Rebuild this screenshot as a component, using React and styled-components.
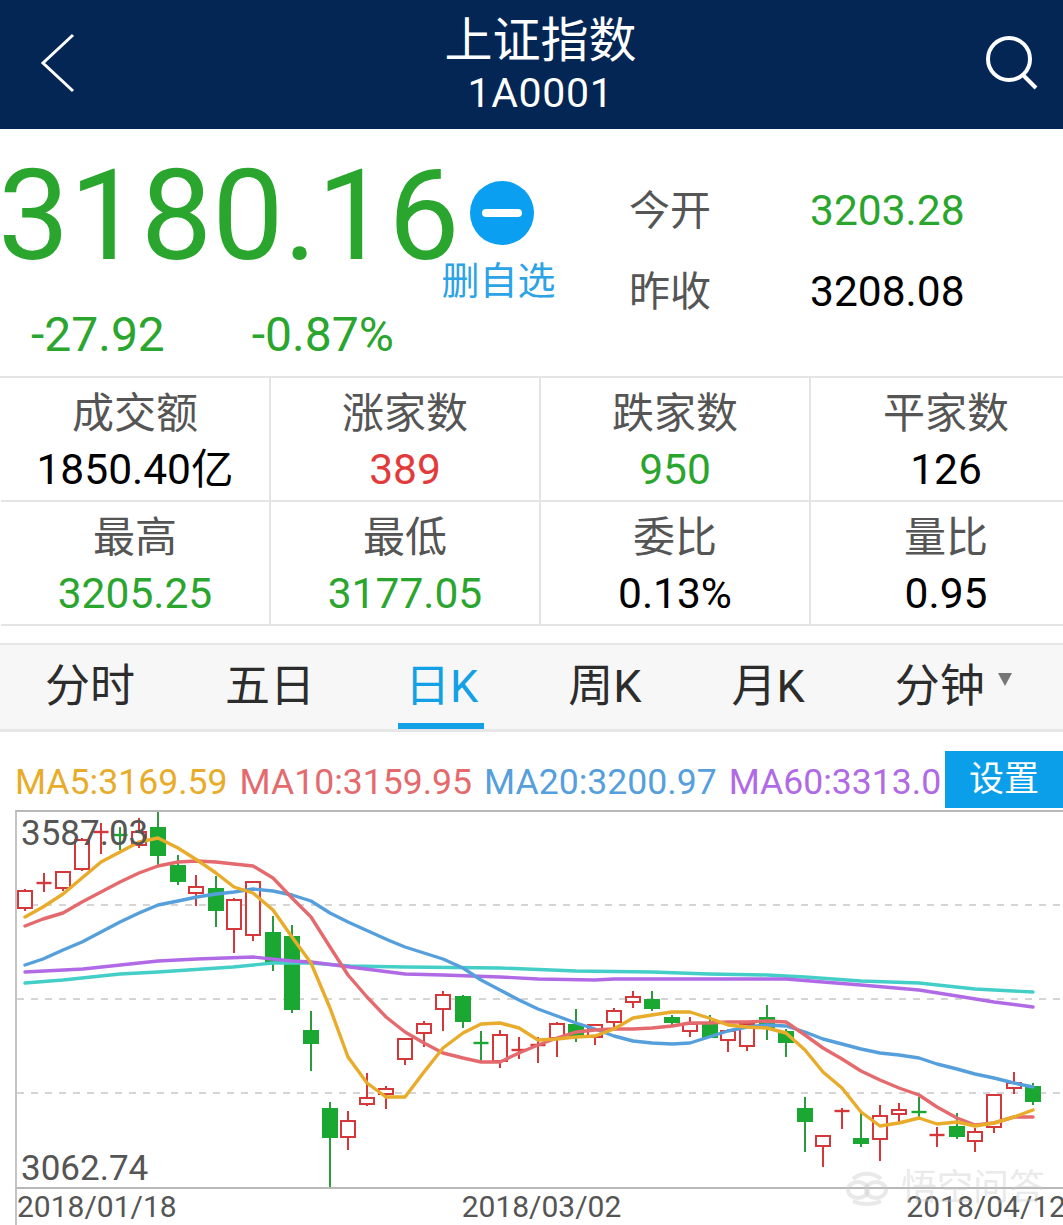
import React from 'react';
import styled, { createGlobalStyle } from 'styled-components';

const GREEN = '#2aa52e';
const CANDLE_RED = '#d5383a';
const CANDLE_GREEN = '#1aa833';

const GlobalStyle = createGlobalStyle`
	html, body {
		margin: 0;
		padding: 0;
		background: #fff;
		overflow: hidden;
	}
	body {
		font-family: Roboto, "Noto Sans CJK SC", sans-serif;
	}
`;

const Page = styled.div`
	position: relative;
	width: 1063px;
	height: 1225px;
	overflow: hidden;
	background: #fff;
`;

const Header = styled.header`
	display: flex;
	align-items: center;
	justify-content: space-between;
	height: 129px;
	padding: 0 25px 3px 40px;
	box-sizing: border-box;
	background: #032654;
	color: #fff;
`;

const TitleBlock = styled.div`
	display: flex;
	flex-direction: column;
	align-items: center;
	margin: 3px 0 0 21px;
`;

const Title = styled.div`
	font-size: 48px;
	line-height: 56px;
`;

const Code = styled.div`
	font-size: 41px;
	line-height: 48px;
	letter-spacing: 0.7px;
`;

const Summary = styled.section`
	display: flex;
	height: 247px;
`;

const PriceColumn = styled.div`
	width: 441px;
	white-space: nowrap;
`;

const Price = styled.div`
	height: 152px;
	margin: 24px 0 0 -2px;
	font-size: 127px;
	line-height: 125px;
	color: ${GREEN};
`;

const ChangeRow = styled.div`
	display: flex;
	gap: 87px;
	padding-left: 31px;
	font-size: 48px;
	line-height: 60px;
	color: ${GREEN};
`;

const FavColumn = styled.div`
	display: flex;
	flex-direction: column;
	align-items: center;
	width: 115px;
	padding-top: 52px;
`;

const FavIcon = styled.div`
	display: flex;
	align-items: center;
	justify-content: center;
	width: 64px;
	height: 64px;
	margin-left: 6px;
	border-radius: 50%;
	background: #0a9ff0;

	&::after {
		content: '';
		width: 40px;
		height: 8px;
		border-radius: 4px;
		background: #fff;
	}
`;

const FavLabel = styled.div`
	margin-top: 13px;
	font-size: 38px;
	line-height: 46px;
	white-space: nowrap;
	color: #2ba3e6;
`;

const QuoteGrid = styled.div`
	display: grid;
	grid-template-columns: 181px auto;
	grid-auto-rows: 81px;
	align-items: center;
	margin: 41px 0 0 73px;
`;

const QuoteLabel = styled.div`
	margin-bottom: 8px;
	font-size: 41px;
	color: #555;
`;

const QuoteValue = styled.div`
	font-size: 42.5px;
	color: ${props => props.$color || '#000'};
`;

const StatsGrid = styled.section`
	display: grid;
	grid-template-columns: repeat(4, 270px);
	padding-left: 1px;
	border-top: 2px solid #e4e4e4;
`;

const StatCell = styled.div`
	display: flex;
	flex-direction: column;
	align-items: center;
	box-sizing: border-box;
	height: 124px;
	padding-top: 9px;
	border-bottom: 2px solid #e4e4e4;
	border-right: ${props => (props.$last ? 'none' : '2px solid #e4e4e4')};
`;

const StatLabel = styled.div`
	font-size: 42px;
	line-height: 54px;
	color: #555;
`;

const StatValue = styled.div`
	margin-top: 2px;
	font-size: 42.5px;
	line-height: 54px;
	color: ${props => props.$color || '#000'};
`;

const TabBar = styled.nav`
	display: flex;
	gap: 90px;
	box-sizing: border-box;
	height: 89px;
	margin-top: 17px;
	padding-left: 45px;
	background: #f7f7f7;
	border-top: 2px solid #e6e6e6;
	border-bottom: 3px solid #e6e6e6;
`;

const Tab = styled.div`
	display: flex;
	align-items: center;
	gap: 13px;
	margin: ${props => (props.$active ? '0 -6px 0 -7px' : '0')};
	padding: ${props => (props.$active ? '0 6px 4px 7px' : '0 0 4px')};
	font-size: 45px;
	color: ${props => (props.$active ? '#12a0e6' : '#2c2c2c')};
	border-bottom: 6px solid ${props => (props.$active ? '#12a0e6' : 'transparent')};
`;

const Caret = styled.span`
	width: 0;
	height: 0;
	margin-bottom: 6px;
	border-left: 7px solid transparent;
	border-right: 7px solid transparent;
	border-top: 13px solid #777;
`;

const LegendRow = styled.div`
	display: flex;
	align-items: flex-end;
	height: 57px;
	margin-top: 19px;
	padding-left: 15px;
`;

const LegendItems = styled.div`
	display: flex;
	flex: 1;
	gap: 12px;
	padding-bottom: 2px;
	overflow: hidden;
	white-space: nowrap;
	font-size: 35.6px;
	line-height: 47px;
`;

const LegendItem = styled.span`
	color: ${props => props.$color};
`;

const SettingsButton = styled.div`
	display: flex;
	align-items: center;
	justify-content: center;
	flex: none;
	box-sizing: border-box;
	width: 118px;
	height: 57px;
	padding-bottom: 8px;
	background: #0a9fe8;
	color: #fff;
	font-size: 35px;
`;

const ChartFrame = styled.div`
	position: relative;
	box-sizing: border-box;
	height: 379px;
	margin: 2px 0 0 15px;
	border-top: 2px solid #b8b8b8;
	border-bottom: 2px solid #b8b8b8;
	border-left: 2px solid #c4c4c4;
`;

const ChartSvg = styled.svg`
	display: block;
`;

const PriceMark = styled.div`
	position: absolute;
	left: 4px;
	${props => (props.$top ? 'top: 1px;' : 'bottom: -3px;')}
	font-size: 35px;
	line-height: 42px;
	color: #555;
`;

const DateRow = styled.div`
	display: flex;
	justify-content: space-between;
	box-sizing: border-box;
	width: 1051px;
	height: 36px;
	margin-left: 15px;
	border-left: 2px solid #c4c4c4;
	font-size: 30px;
	line-height: 36px;
	color: #555;
	white-space: nowrap;
`;

const Watermark = styled.div`
	position: absolute;
	right: 18px;
	bottom: 17px;
	display: flex;
	align-items: center;
	gap: 12px;
	font-size: 36px;
	line-height: 40px;
	color: rgba(200, 200, 200, 0.4);
`;

const ChevronIcon = () => (
	<svg width="36" height="60" viewBox="40 33 36 60" fill="none" stroke="#fff" strokeWidth="3">
		<path d="M73 35 43 63 73 91" />
	</svg>
);

const SearchIcon = () => (
	<svg width="54" height="54" viewBox="985 37 54 54" fill="none" stroke="#fff" strokeWidth="4">
		<circle cx="1010" cy="60" r="21" />
		<path d="M1024 76 1037 89" />
	</svg>
);

const CloudIcon = () => (
	<svg width="44" height="36" viewBox="0 0 44 36" fill="none" stroke="rgba(200,200,200,0.4)" strokeWidth="4">
		<ellipse cx="13" cy="20" rx="10" ry="8" />
		<ellipse cx="31" cy="20" rx="10" ry="8" />
		<path d="M8 9C16 2 28 2 36 9M8 31C16 35 28 35 36 31" />
	</svg>
);

// [x, wickTop, wickBottom, bodyTop, bodyBottom, isUp] in page coordinates
const CANDLES = [
	[25, 889, 911, 891, 908, 1], [44, 873, 892, 883, 883, 1], [63, 871, 891, 872, 888, 1],
	[82, 838, 871, 840, 869, 1], [101, 823, 854, 832, 832, 1], [120, 827, 850, 835, 835, 0],
	[139, 818, 848, 832, 845, 1], [158, 810, 865, 828, 855, 0], [178, 855, 885, 866, 881, 0],
	[196, 875, 906, 887, 893, 1], [216, 876, 927, 889, 910, 0], [234, 898, 953, 900, 929, 1],
	[253, 881, 941, 882, 935, 1], [273, 916, 971, 933, 962, 0], [292, 925, 1013, 937, 1009, 0],
	[311, 1011, 1071, 1031, 1043, 0], [330, 1102, 1187, 1109, 1137, 0], [348, 1111, 1150, 1121, 1137, 1],
	[367, 1073, 1106, 1098, 1104, 1], [386, 1086, 1109, 1089, 1094, 1], [405, 1039, 1065, 1039, 1059, 1],
	[424, 1021, 1047, 1024, 1033, 1], [443, 991, 1031, 995, 1009, 1], [463, 995, 1028, 997, 1021, 0],
	[481, 1031, 1061, 1043, 1043, 0], [500, 1030, 1068, 1035, 1061, 1], [519, 1037, 1059, 1050, 1050, 1],
	[538, 1037, 1063, 1045, 1045, 1], [557, 1022, 1057, 1024, 1038, 1], [576, 1009, 1042, 1025, 1036, 0],
	[595, 1024, 1045, 1025, 1037, 1], [614, 1008, 1027, 1011, 1022, 1], [633, 991, 1008, 997, 1002, 1],
	[652, 991, 1011, 1000, 1008, 0], [672, 1015, 1025, 1018, 1022, 0], [690, 1017, 1037, 1024, 1031, 1],
	[710, 1015, 1037, 1024, 1037, 0], [728, 1029, 1052, 1031, 1040, 1], [747, 1023, 1051, 1024, 1046, 1],
	[767, 1005, 1040, 1018, 1027, 0], [786, 1029, 1057, 1032, 1042, 0], [805, 1097, 1152, 1109, 1121, 0],
	[823, 1135, 1167, 1136, 1146, 1], [842, 1108, 1129, 1111, 1111, 1], [861, 1113, 1147, 1139, 1143, 0],
	[880, 1105, 1161, 1116, 1139, 1], [899, 1103, 1122, 1110, 1114, 1], [919, 1097, 1117, 1112, 1112, 0],
	[937, 1127, 1147, 1135, 1135, 1], [957, 1113, 1139, 1127, 1136, 0], [975, 1128, 1152, 1132, 1141, 1],
	[994, 1094, 1133, 1095, 1127, 1], [1014, 1072, 1094, 1083, 1088, 1], [1033, 1083, 1105, 1087, 1101, 0],
];

const MA_LINES = [
	{
		color: '#43cfc7',
		points: '25,983 63,980 120,974 158,972 233,967 273,963 311,963 350,966 405,967 500,968 576,971 652,972 709,974 767,975 805,977 861,981 919,983 975,989 1033,992',
	},
	{
		color: '#b06ae6',
		points: '25,972 83,969 158,961 197,959 253,957 292,961 311,962 350,967 405,974 443,975 500,977 538,979 595,980 614,979 709,979 786,979 823,982 861,985 919,990 957,996 994,1002 1033,1007',
	},
	{
		color: '#55a0dc',
		points: '25,965 43,959 63,950 82,942 101,932 120,922 139,913 158,905 178,901 197,897 216,894 234,892 253,889 273,891 292,895 311,901 330,913 348,922 388,940 405,947 424,953 443,959 463,968 481,980 500,990 519,1000 538,1009 557,1016 576,1023 595,1029 614,1036 633,1041 652,1043 672,1044 690,1043 709,1037 728,1031 747,1027 767,1025 786,1026 805,1032 823,1039 842,1044 861,1049 880,1053 899,1055 919,1058 937,1064 957,1069 975,1074 994,1078 1014,1083 1033,1087',
	},
	{
		color: '#e46a6e',
		points: '25,926 43,919 63,913 82,902 101,892 120,882 139,873 158,866 178,862 197,861 216,862 234,864 253,866 273,878 292,898 311,917 330,947 348,975 367,997 386,1017 405,1032 424,1043 443,1053 463,1058 481,1062 500,1062 519,1053 538,1045 557,1038 576,1032 595,1030 614,1029 633,1029 652,1028 672,1026 690,1023 709,1023 728,1022 747,1022 767,1021 786,1022 805,1035 823,1048 842,1059 861,1071 880,1080 899,1088 919,1095 937,1107 957,1118 975,1125 994,1123 1014,1117 1033,1117',
	},
	{
		color: '#e8ac2a',
		points: '25,917 43,907 63,894 82,878 101,862 120,852 139,842 158,838 178,848 197,860 216,873 234,887 253,893 273,910 292,937 311,963 330,1008 348,1057 367,1083 386,1097 405,1097 424,1072 443,1048 463,1033 481,1024 500,1023 519,1028 538,1040 557,1039 576,1037 595,1036 614,1029 633,1018 652,1015 672,1012 690,1012 709,1018 728,1025 747,1027 767,1028 786,1033 805,1050 823,1072 842,1088 861,1112 880,1126 899,1123 919,1118 937,1124 957,1122 975,1126 994,1123 1014,1117 1033,1110',
	},
];

const Candle = ({ data }) => {
	const [x, wickTop, wickBottom, bodyTop, bodyBottom, isUp] = data;
	const color = isUp ? CANDLE_RED : CANDLE_GREEN;
	const flat = bodyTop === bodyBottom;

	return (
		<g>
			<line x1={x} x2={x} y1={wickTop} y2={wickBottom} stroke={isUp ? CANDLE_RED : '#2b9a3f'} strokeWidth="2" />
			{flat ? (
				<line x1={x - 7.5} x2={x + 7.5} y1={bodyTop} y2={bodyTop} stroke={color} strokeWidth="2.4" />
			) : (
				<rect
					x={x - 7}
					y={bodyTop}
					width="14"
					height={bodyBottom - bodyTop}
					fill={isUp ? '#fff' : color}
					stroke={color}
					strokeWidth="2"
				/>
			)}
		</g>
	);
};

const KLineChart = () => (
	<ChartSvg width="1046" height="375" viewBox="17 812 1046 375">
		{[905, 999, 1093].map(y => (
			<line key={y} x1="17" x2="1063" y1={y} y2={y} stroke="#c8c8c8" strokeWidth="1.5" strokeDasharray="7 7" />
		))}
		{CANDLES.map(candle => (
			<Candle key={candle[0]} data={candle} />
		))}
		{MA_LINES.map(line => (
			<polyline
				key={line.color}
				points={line.points}
				fill="none"
				stroke={line.color}
				strokeWidth="3.4"
				strokeLinejoin="round"
				strokeLinecap="round"
			/>
		))}
	</ChartSvg>
);

const stats = [
	{ label: '成交额', value: '1850.40亿' },
	{ label: '涨家数', value: '389', color: '#e23b3b' },
	{ label: '跌家数', value: '950', color: GREEN },
	{ label: '平家数', value: '126' },
	{ label: '最高', value: '3205.25', color: GREEN },
	{ label: '最低', value: '3177.05', color: GREEN },
	{ label: '委比', value: '0.13%' },
	{ label: '量比', value: '0.95' },
];

const tabs = ['分时', '五日', '日K', '周K', '月K'];

const legend = [
	{ text: 'MA5:3169.59', color: '#e8ac2a' },
	{ text: 'MA10:3159.95', color: '#e46a6e' },
	{ text: 'MA20:3200.97', color: '#55a0dc' },
	{ text: 'MA60:3313.0', color: '#b06ae6' },
];

const App = () => (
	<Page>
		<GlobalStyle />
		<Header>
			<ChevronIcon />
			<TitleBlock>
				<Title>上证指数</Title>
				<Code>1A0001</Code>
			</TitleBlock>
			<SearchIcon />
		</Header>
		<Summary>
			<PriceColumn>
				<Price>3180.16</Price>
				<ChangeRow>
					<span>-27.92</span>
					<span>-0.87%</span>
				</ChangeRow>
			</PriceColumn>
			<FavColumn>
				<FavIcon />
				<FavLabel>删自选</FavLabel>
			</FavColumn>
			<QuoteGrid>
				<QuoteLabel>今开</QuoteLabel>
				<QuoteValue $color={GREEN}>3203.28</QuoteValue>
				<QuoteLabel>昨收</QuoteLabel>
				<QuoteValue>3208.08</QuoteValue>
			</QuoteGrid>
		</Summary>
		<StatsGrid>
			{stats.map((stat, i) => (
				<StatCell key={stat.label} $last={i % 4 === 3}>
					<StatLabel>{stat.label}</StatLabel>
					<StatValue $color={stat.color}>{stat.value}</StatValue>
				</StatCell>
			))}
		</StatsGrid>
		<TabBar>
			{tabs.map(tab => (
				<Tab key={tab} $active={tab === '日K'}>{tab}</Tab>
			))}
			<Tab>分钟<Caret /></Tab>
		</TabBar>
		<LegendRow>
			<LegendItems>
				{legend.map(item => (
					<LegendItem key={item.text} $color={item.color}>{item.text}</LegendItem>
				))}
			</LegendItems>
			<SettingsButton>设置</SettingsButton>
		</LegendRow>
		<ChartFrame>
			<KLineChart />
			<PriceMark $top>3587.03</PriceMark>
			<PriceMark>3062.74</PriceMark>
		</ChartFrame>
		<DateRow>
			<span>2018/01/18</span>
			<span>2018/03/02</span>
			<span>2018/04/12</span>
		</DateRow>
		<Watermark>
			<CloudIcon />
			<span>悟空问答</span>
		</Watermark>
	</Page>
);

export default App;
